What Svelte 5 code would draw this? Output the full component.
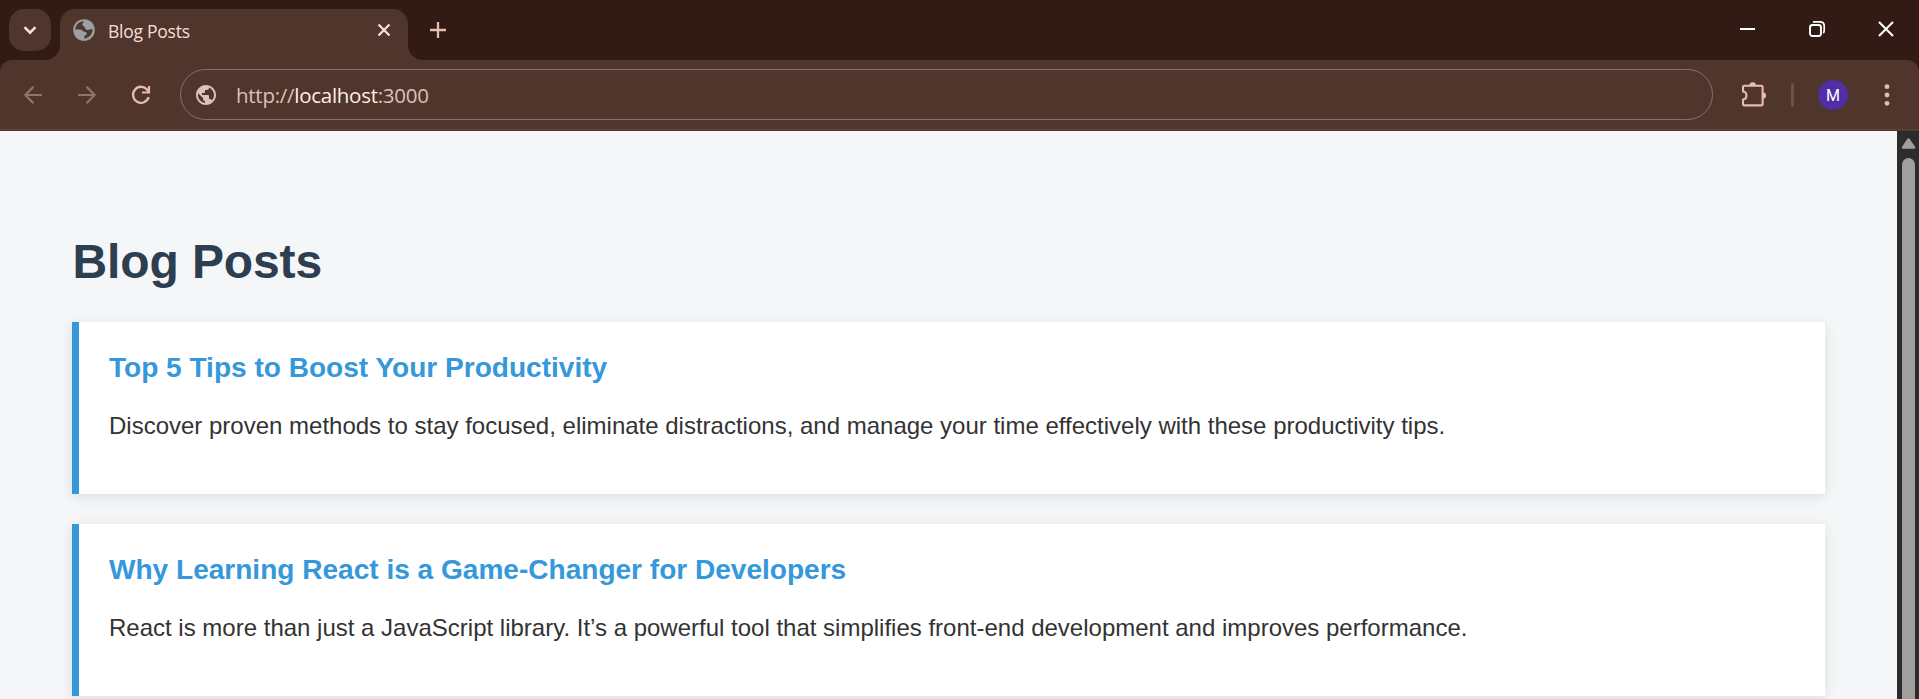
<script>
  const posts = [
    { title: 'Top 5 Tips to Boost Your Productivity', body: 'Discover proven methods to stay focused, eliminate distractions, and manage your time effectively with these productivity tips.' },
    { title: 'Why Learning React is a Game-Changer for Developers', body: 'React is more than just a JavaScript library. It’s a powerful tool that simplifies front-end development and improves performance.' }
  ];
</script>

<div class="window">
  <header class="tabs">
    <button class="search" aria-label="Search tabs">
      <svg width="42" height="42" viewBox="0 0 42 42"><path d="M15.500 18.200 21 23.700l5.500-5.500" fill="none" stroke="#f5e0da" stroke-width="2.600" /></svg>
    </button>
    <div class="tab">
      <svg class="fav" width="24" height="24" viewBox="0 0 24 24"><circle cx="12" cy="12" r="10.800" fill="#9aa0a6" /><path d="M3.300 11.500C3.500 7 7 3.600 11.500 3.300c.8 1-1.500 2-1.200 3.400.4 1.600 2.500 1.200 2.700 3 .2 1.500 1.500 2.300 3 2.200 1.700 0 2.500-1.400 4.700-.3-.2 4.600-3.600 8.600-8.500 9v-1.800c.3-1.600 2.300-1.400 2.500-3 .1-1.900-1.500-2.200-3-2.300-1.500-.2-1.500-2-3.500-2z" fill="#50352c" /></svg>
      <span class="tabname">Blog Posts</span>
      <svg class="close" width="14" height="14" viewBox="0 0 14 14"><path d="m1.500 1.500 11 11m0-11-11 11" stroke="#f5e0da" stroke-width="2.200" /></svg>
    </div>
    <svg class="plus" width="16" height="16" viewBox="0 0 16 16"><path d="M8 0v16M0 8h16" stroke="#e7bdb0" stroke-width="2.300" /></svg>
    <div class="controls">
      <svg width="16" height="16" viewBox="0 0 16 16"><path d="M0 8h15" stroke="#fff" stroke-width="2" /></svg>
      <svg width="16" height="16" viewBox="0 0 16 16"><rect x="1" y="4" width="11" height="11" rx="2.500" fill="none" stroke="#fff" stroke-width="1.900" /><path d="M4 1.500c.5-.5 1-.7 2-.7h5c2.500 0 4.200 1.700 4.200 4.200v4c0 1.500-.3 2.500-1 3" fill="none" stroke="#fff" stroke-width="1.700" /></svg>
      <svg width="16" height="16" viewBox="0 0 16 16"><path d="m1 1 14 14m0-14L1 15" stroke="#fff" stroke-width="2.100" /></svg>
    </div>
  </header>

  <div class="toolbar">
    <svg class="back" width="20" height="20" viewBox="0 0 20 20"><path d="M19 10H2.500m8-8.300L2.300 10l8.200 8.300" fill="none" stroke="#94736a" stroke-width="2.200" /></svg>
    <svg class="fwd" width="20" height="20" viewBox="0 0 20 20"><path d="M1 10h16.500M9.500 1.700l8.200 8.300-8.200 8.300" fill="none" stroke="#94736a" stroke-width="2.200" /></svg>
    <svg class="reload" width="20" height="20" viewBox="0 0 20 20"><path d="M17.700 12.200A8 8 0 1 1 16.500 5l1.500 2" fill="none" stroke="#e7bdb0" stroke-width="2.300" /><path d="M18 1v6.500h-7" fill="none" stroke="#e7bdb0" stroke-width="2.200" /></svg>
    <div class="address">
      <svg width="24" height="24" viewBox="0 0 24 24"><path fill="#d8c2bc" d="M12 2C6.480 2 2 6.480 2 12s4.480 10 10 10 10-4.480 10-10S17.520 2 12 2zm-1 17.930c-3.950-.49-7-3.850-7-7.930 0-.62.080-1.210.21-1.790L9 15v1c0 1.100.9 2 2 2v1.930zm6.900-2.540c-.26-.81-1-1.390-1.900-1.390h-1v-3c0-.55-.45-1-1-1H8v-2h2c.55 0 1-.45 1-1V7h2c1.100 0 2-.9 2-2v-.41c2.930 1.190 5 4.060 5 7.410 0 2.080-.8 3.970-2.100 5.390z" /></svg>
      <span class="url">http://<b>localhost</b>:3000</span>
    </div>
    <svg class="ext" width="26" height="26" viewBox="0 0 26 26"><path d="M3.200 3.800h17.200q1.200 0 1.200 1.200v17.200q0 1.200-1.200 1.200H3.200q-1.200 0-1.200-1.200v-4.700c4.600-.4 4.600-7.600 0-8V5q0-1.200 1.200-1.200z" fill="none" stroke="#e7bdb0" stroke-width="2.100" stroke-linejoin="round" /><path d="M8.500 3.500a3.200 3.200 0 0 1 6.400 0zM22 10.400a3.100 3.100 0 0 1 0 6.200z" fill="#e7bdb0" /></svg>
    <i class="sep"></i>
    <span class="avatar">M</span>
    <svg class="menu" width="6" height="22" viewBox="0 0 6 22"><g fill="#e7bdb0"><circle cx="3" cy="2.700" r="2.400" /><circle cx="3" cy="11" r="2.400" /><circle cx="3" cy="19.300" r="2.400" /></g></svg>
  </div>

  <div class="view">
    <main>
      <h1>Blog Posts</h1>
      {#each posts as post}
        <article>
          <h2>{post.title}</h2>
          <p>{post.body}</p>
        </article>
      {/each}
    </main>
    <div class="scroll">
      <svg width="15" height="11" viewBox="0 0 15 11"><path d="M7.500 1.500 13 9.500H2z" fill="#9f9f9f" stroke="#9f9f9f" stroke-width="2.500" stroke-linejoin="round" /></svg>
      <div class="thumb"></div>
    </div>
  </div>
</div>

<style>
  :global(body) { overflow: hidden; background: #2c2c2c; }
  .window { width: 1919px; height: 699px; overflow: hidden; display: flex; flex-direction: column; box-sizing: border-box; background: #311b14; }
  .window * { box-sizing: border-box; }
  svg { display: block; flex: none; }
  .tabs { height: 60px; flex: none; display: flex; align-items: flex-start; padding: 9px 21px 0 9px; }
  .search { width: 42px; height: 42px; padding: 0; border: 0; border-radius: 15px; background: #50352c; flex: none; }
  .tab { position: relative; margin-left: 9px; width: 348px; height: 51px; background: #50352c; border-radius: 15px 15px 0 0; display: flex; align-items: flex-start; padding: 9px 17px 0 12px; }
  .tab::before, .tab::after { content: ''; position: absolute; bottom: 0; width: 15px; height: 15px; }
  .tab::before { left: -15px; background: radial-gradient(circle at 0 0, transparent 14.500px, #50352c 15.500px); }
  .tab::after { right: -15px; background: radial-gradient(circle at 100% 0, transparent 14.500px, #50352c 15.500px); }
  .tabname { margin: 0 auto 0 12px; font: 17.500px/26px "Open Sans", sans-serif; letter-spacing: -0.250px; color: #f5ded8; }
  .close { margin-top: 5px; }
  .plus { margin: 13px 0 0 22px; }
  .controls { margin: 12px 4px 0 auto; display: flex; gap: 53px; }
  .toolbar { height: 71px; flex: none; display: flex; align-items: center; padding: 0 29px 2px 23px; background: linear-gradient(#50352c 69px, #5c443c 69px, #5c443c 70px, #50352c 70px); border-radius: 12px 12px 0 0; }
  .fwd { margin-left: 34px; }
  .reload { margin-left: 34px; }
  .address { margin-left: 29px; width: 1533px; height: 51px; border: 1.500px solid #88706a; border-radius: 26px; display: flex; align-items: center; padding-left: 13px; flex: none; }
  .url { margin-left: 18px; font: 20.500px/30px "Open Sans", sans-serif; color: #d8c2bc; letter-spacing: -0.270px; white-space: nowrap; }
  .url b { font-weight: 400; color: #ffede8; }
  .ext { margin-left: 28px; }
  .sep { width: 3px; height: 24px; border-radius: 2px; background: #6d5047; margin-left: 24px; }
  .avatar { margin-left: 24px; width: 30px; height: 30px; border-radius: 50%; background: #512da8; color: #fff; font: 16px/31px Roboto, sans-serif; text-align: center; }
  .menu { margin-left: 36px; }
  .view { flex: 1; min-height: 0; display: flex; background: #f4f6f8; }
  main { width: 1897px; flex: none; padding: 101px 72px 0; font-family: "Liberation Sans", Arial, sans-serif; overflow: hidden; }
  h1 { margin: 0 0 31px; padding-left: 0.500px; font-size: 48px; line-height: 59px; letter-spacing: -0.120px; color: #2c3e50; }
  article { height: 172px; margin-bottom: 30px; border-left: 7px solid #3498db; background: #fff; padding: 30px; box-shadow: 0 3px 12px rgba(0, 0, 0, .1); }
  h2 { margin: 0; font-size: 28.050px; line-height: 32px; color: #3498db; }
  p { margin: 28px 0 0; font-size: 24px; line-height: 28px; color: #333; white-space: nowrap; }
  .scroll { width: 22px; background: #2c2c2c; padding: 7px 0 0 4px; }
  .thumb { margin: 9px 0 0 1px; width: 13px; height: 600px; border-radius: 7px; background: #9f9f9f; }
</style>
